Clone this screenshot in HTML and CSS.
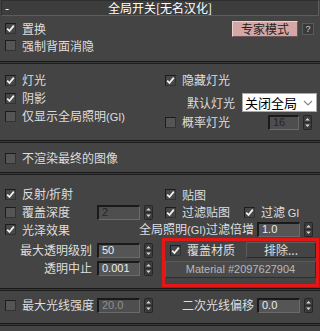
FILE: index.html
```html
<!DOCTYPE html>
<html lang="zh-CN">
<head>
  <meta charset="UTF-8" />
  <meta name="viewport" content="width=device-width, initial-scale=1.0" />
  <title>全局开关</title>
  <link rel="stylesheet" href="styles.css">
</head>
<body>
  <div class="panel">
    <div class="title"><span class="collapse">-</span><span>全局开关[无名汉化]</span></div>

    <div class="group g1">
      <div class="row">
        <span class="cb on"></span><span class="txt">置换</span>
        <span class="btn-expert">专家模式</span>
        <span class="btn-help">?</span>
      </div>
      <div class="row">
        <span class="cb"></span><span class="txt">强制背面消隐</span>
      </div>
    </div>
    <div class="sep"></div>

    <div class="group g2">
      <div class="col left">
        <div class="row"><span class="cb on"></span><span class="txt">灯光</span></div>
        <div class="row"><span class="cb on"></span><span class="txt">阴影</span></div>
        <div class="row"><span class="cb"></span><span class="txt">仅显示全局照明<span class="lat">(GI)</span></span></div>
      </div>
      <div class="col right">
        <div class="row"><span class="cb on"></span><span class="txt">隐藏灯光</span></div>
        <div class="row sel-row">
          <span class="txt">默认灯光</span>
          <span class="select"><span class="sel-text">关闭全局</span><span class="chev"></span></span>
        </div>
        <div class="row">
          <span class="cb"></span><span class="txt">概率灯光</span>
          <span class="spin push"><span class="field narrow dis">16</span><span class="arrows"></span></span>
        </div>
      </div>
    </div>
    <div class="sep"></div>

    <div class="group g3">
      <div class="row"><span class="cb"></span><span class="txt">不渲染最终的图像</span></div>
    </div>
    <div class="sep"></div>

    <div class="group g4">
      <div class="row">
        <div class="half"><span class="cb on"></span><span class="txt">反射<span class="lat">/</span>折射</span></div>
        <div class="half r"><span class="cb on"></span><span class="txt">贴图</span></div>
      </div>
      <div class="row">
        <div class="half">
          <span class="cb"></span><span class="txt lbl-in">覆盖深度</span>
          <span class="spin"><span class="field dis">2</span><span class="arrows"></span></span>
        </div>
        <div class="half r">
          <span class="cb on"></span><span class="txt">过滤贴图</span>
          <span class="cb on gi"></span><span class="txt">过滤 <span class="lat">GI</span></span>
        </div>
      </div>
      <div class="row">
        <div class="half"><span class="cb on"></span><span class="txt">光泽效果</span></div>
        <div class="half r end">
          <span class="txt">全局照明<span class="lat">(GI)</span>过滤倍增</span>
          <span class="spin"><span class="field">1.0</span><span class="arrows"></span></span>
        </div>
      </div>
      <div class="lower">
        <div class="col left">
          <div class="row">
            <span class="txt lbl">最大透明级别</span>
            <span class="spin"><span class="field">50</span><span class="arrows"></span></span>
          </div>
          <div class="row">
            <span class="txt lbl">透明中止</span>
            <span class="spin"><span class="field">0.001</span><span class="arrows"></span></span>
          </div>
        </div>
        <div class="override">
          <div class="ov-row">
            <span class="cb on"></span><span class="txt">覆盖材质</span>
            <span class="btn-plain">排除...</span>
          </div>
          <div class="btn-mat">Material #2097627904</div>
        </div>
      </div>
    </div>
    <div class="sep"></div>

    <div class="group g5">
      <div class="row">
        <div class="half">
          <span class="cb"></span><span class="txt lbl-in">最大光线强度</span>
          <span class="spin"><span class="field dim">20.0</span><span class="arrows"></span></span>
        </div>
        <div class="half r end">
          <span class="txt">二次光线偏移</span>
          <span class="spin"><span class="field">0.0</span><span class="arrows"></span></span>
        </div>
      </div>
    </div>
    <div class="sep"></div>
  </div>

  <script>
    // 勾选框和微调按钮用同一段 SVG 画出来
    const tick = '<svg width="9" height="9" viewBox="0 0 9 9"><polyline points="1.2,4.6 3.5,7 7.8,1.6" fill="none" stroke="#f2f2f2" stroke-width="1.8"/></svg>';
    document.querySelectorAll('.cb.on').forEach(cb => { cb.innerHTML = tick; });

    const arrows = '<svg width="9" height="15" viewBox="0 0 9 15">' +
      '<rect x="0.5" y="0.5" width="8" height="14" rx="1" fill="#3c3c3c" stroke="#262626"/>' +
      '<line x1="1" y1="7.5" x2="8" y2="7.5" stroke="#2a2a2a"/>' +
      '<polygon points="2.2,5.6 4.5,3 6.8,5.6" fill="#d8d8d8"/>' +
      '<polygon points="2.2,9.4 4.5,12 6.8,9.4" fill="#d8d8d8"/></svg>';
    document.querySelectorAll('.arrows').forEach(a => { a.innerHTML = arrows; });

    document.querySelectorAll('.chev').forEach(c => {
      c.innerHTML = '<svg width="10" height="6" viewBox="0 0 10 6"><polyline points="1,1 5,5 9,1" fill="none" stroke="#888" stroke-width="1.2"/></svg>';
    });
  </script>
</body>
</html>
```

FILE: styles.css
```css
* {
  box-sizing: border-box;
}
body {
  margin: 0;
  background-color: #444444;
  font-family: "Noto Sans CJK SC", "Noto Sans", sans-serif;
  font-size: 12px;
  color: #dedede;
}
.panel {
  width: 320px;
  height: 331px;
  background-color: #444444;
  overflow: hidden;
}
.title {
  height: 16px;
  margin: 0 1px;
  border: 1px solid #5c5c5c;
  border-top-color: #2e2e2e;
  border-left-color: #2e2e2e;
  background-color: #3d3d3d;
  color: #ffffff;
  display: flex;
  align-items: center;
  justify-content: center;
  position: relative;
  line-height: 14px;
}
.collapse {
  position: absolute;
  left: 3px;
  top: 0;
  line-height: 13px;
}
.sep {
  height: 3px;
  border-top: 1px solid #181818;
  border-bottom: 1px solid #1e1e1e;
  background-color: #383838;
}
.lat {
  font-family: "Liberation Sans", "DejaVu Sans", sans-serif;
  font-size: 11px;
}
.row {
  display: flex;
  align-items: center;
  white-space: nowrap;
}
.txt {
  line-height: 14px;
}

/* checkbox */
.cb {
  width: 11px;
  height: 11px;
  margin: 0 6px 0 5px;
  flex: none;
  border: 1px solid #1c1c1c;
  border-right-color: #333;
  border-bottom-color: #333;
  background-color: #555555;
  display: flex;
  align-items: center;
  justify-content: center;
}
.cb.on {
  background-color: #474747;
}

/* group 1 */
.g1 {
  height: 45px;
  padding: 4px 0 0;
}
.g1 .row {
  height: 17px;
}
.btn-expert {
  margin-left: auto;
  width: 66px;
  height: 16px;
  background-color: #d4a6a6;
  border: 1px solid #ecd0d0;
  border-right-color: #6e5454;
  border-bottom-color: #6e5454;
  color: #222;
  text-align: center;
  line-height: 13px;
}
.btn-help {
  width: 12px;
  height: 12px;
  margin: 0 6px 0 4px;
  background-color: #3a3a3a;
  border: 1px solid #5a5a5a;
  color: #d0d0d0;
  font-family: "Liberation Sans", sans-serif;
  font-size: 9px;
  line-height: 10px;
  text-align: center;
}

/* group 2 */
.g2 {
  height: 76px;
  padding-top: 7px;
  display: flex;
}
.col {
  display: flex;
  flex-direction: column;
}
.col.left {
  width: 160px;
}
.col.right {
  width: 160px;
}
.g2 .row {
  height: 18px;
}
.g2 .sel-row {
  height: 19px;
  margin: 4px 0 1px;
  padding-left: 27px;
}
.select {
  margin-left: 7px;
  width: 75px;
  height: 19px;
  background-color: #ffffff;
  border: 1px solid #a9a9a9;
  color: #000;
  font-size: 13px;
  display: flex;
  align-items: center;
}
.sel-text {
  padding-left: 2px;
  line-height: 16px;
}
.chev {
  margin-left: auto;
  margin-right: 3px;
  display: flex;
}
.push {
  margin-left: auto;
  margin-right: 8px;
}

/* spinner field */
.spin {
  display: flex;
  align-items: center;
  gap: 4px;
}
.field {
  width: 43px;
  height: 15px;
  background-color: #555555;
  border: 1px solid #1a1a1a;
  border-right-color: #6a6a6a;
  border-bottom-color: #6a6a6a;
  border-top-width: 2px;
  border-left-width: 2px;
  color: #ececec;
  font-family: "Liberation Sans", "DejaVu Sans", sans-serif;
  font-size: 11px;
  line-height: 11px;
  padding-left: 3px;
}
.field.narrow {
  width: 31px;
}
.field.dis {
  color: #262626;
  background-color: #4e4e4e;
}
.field.dim {
  color: #8e8e8e;
  background-color: #4e4e4e;
}
.arrows {
  display: flex;
}

/* group 3 */
.g3 {
  height: 29px;
  padding-top: 6px;
}
.g3 .row {
  height: 18px;
}

/* group 4 */
.g4 {
  height: 113px;
  padding-top: 11px;
}
.g4 > .row {
  height: 17px;
}
.g4 > .row:nth-child(2) {
  height: 18px;
}
.half {
  width: 160px;
  display: flex;
  align-items: center;
  white-space: nowrap;
}
.half.end {
  justify-content: flex-end;
  padding-right: 7px;
  gap: 3px;
}
.lbl-in {
  width: 75px;
}
.cb.gi {
  margin-left: 14px;
}
.lower {
  display: flex;
}
.lower .col.left {
  padding-top: 3px;
}
.lower .row {
  height: 18px;
}
.lbl {
  width: 92px;
  text-align: right;
  margin-right: 5px;
}
.override {
  width: 157px;
  height: 49px;
  margin-left: 2px;
  border: 3px solid #e41616;
  padding: 1px 0 0 0;
}
.ov-row {
  height: 16px;
  display: flex;
  align-items: center;
}
.btn-plain {
  margin-left: auto;
  width: 70px;
  height: 16px;
  background-color: #444;
  border: 1px solid #2a2a2a;
  border-top-color: #5c5c5c;
  border-left-color: #5c5c5c;
  text-align: center;
  line-height: 14px;
}
.btn-mat {
  margin: 3px 0 0 0;
  width: 151px;
  height: 17px;
  background-color: #4a4a4a;
  border: 1px solid #2e2e2e;
  border-top-color: #5a5a5a;
  border-left-color: #5a5a5a;
  color: #b8b8b8;
  font-family: "Liberation Sans", "DejaVu Sans", sans-serif;
  font-size: 11px;
  text-align: center;
  line-height: 15px;
}

/* group 5 */
.g5 {
  height: 32px;
  padding-top: 5px;
}
.g5 .row {
  height: 18px;
}
```
